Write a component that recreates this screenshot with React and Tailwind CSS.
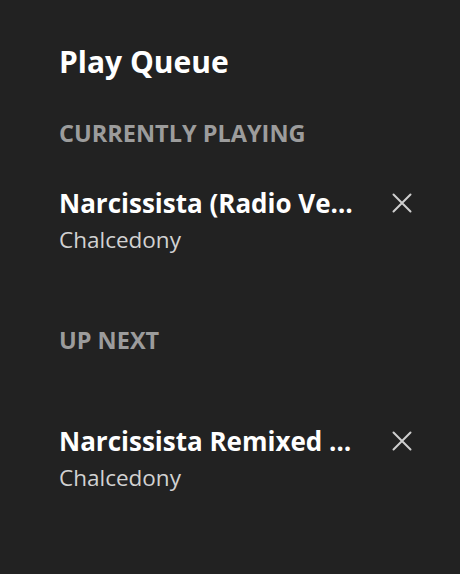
const sections = [
  {
    label: "CURRENTLY PLAYING",
    tracks: [{ id: "t1", title: "Narcissista (Radio Version)", artist: "Chalcedony" }],
  },
  {
    label: "UP NEXT",
    tracks: [{ id: "t2", title: "Narcissista Remixed (Extended Mix)", artist: "Chalcedony" }],
  },
];

function CloseIcon() {
  return (
    <svg width="20" height="20" viewBox="0 0 20 20" fill="none" stroke="currentColor" strokeWidth="2" strokeLinecap="round">
      <path d="M1.5 1.5l17 17M18.5 1.5l-17 17" />
    </svg>
  );
}

function TrackRow({ track }) {
  return (
    <div className="flex items-start justify-between pr-[48px]">
      <div className="min-w-0 flex-1">
        <div className="truncate text-[26px] font-bold leading-[34px] text-white max-w-[296px]">
          {track.title}
        </div>
        <div className="text-[22.5px] leading-[40px] text-[#d2d2d2]">{track.artist}</div>
      </div>
      <button type="button" className="mt-[7px] text-[#cfcfcf]">
        <CloseIcon />
      </button>
    </div>
  );
}

export default function App() {
  return (
    <div
      className="min-h-[574px] w-full bg-[#222222] pl-[59px] pt-[44px]"
      style={{ fontFamily: "'Open Sans', Lato, sans-serif" }}
    >
      <h1 className="text-[30px] font-bold leading-[36px] text-white">Play Queue</h1>
      <div className="mt-[39px]">
        <h2 className="text-[23.5px] font-bold leading-[28px] text-[#9c9c9c]">{sections[0].label}</h2>
        <div className="mt-[39px]">
          <TrackRow track={sections[0].tracks[0]} />
        </div>
      </div>
      <div className="mt-[66px]">
        <h2 className="text-[23.5px] font-bold leading-[28px] text-[#9c9c9c]">{sections[1].label}</h2>
        <div className="mt-[70px]">
          <TrackRow track={sections[1].tracks[0]} />
        </div>
      </div>
    </div>
  );
}
